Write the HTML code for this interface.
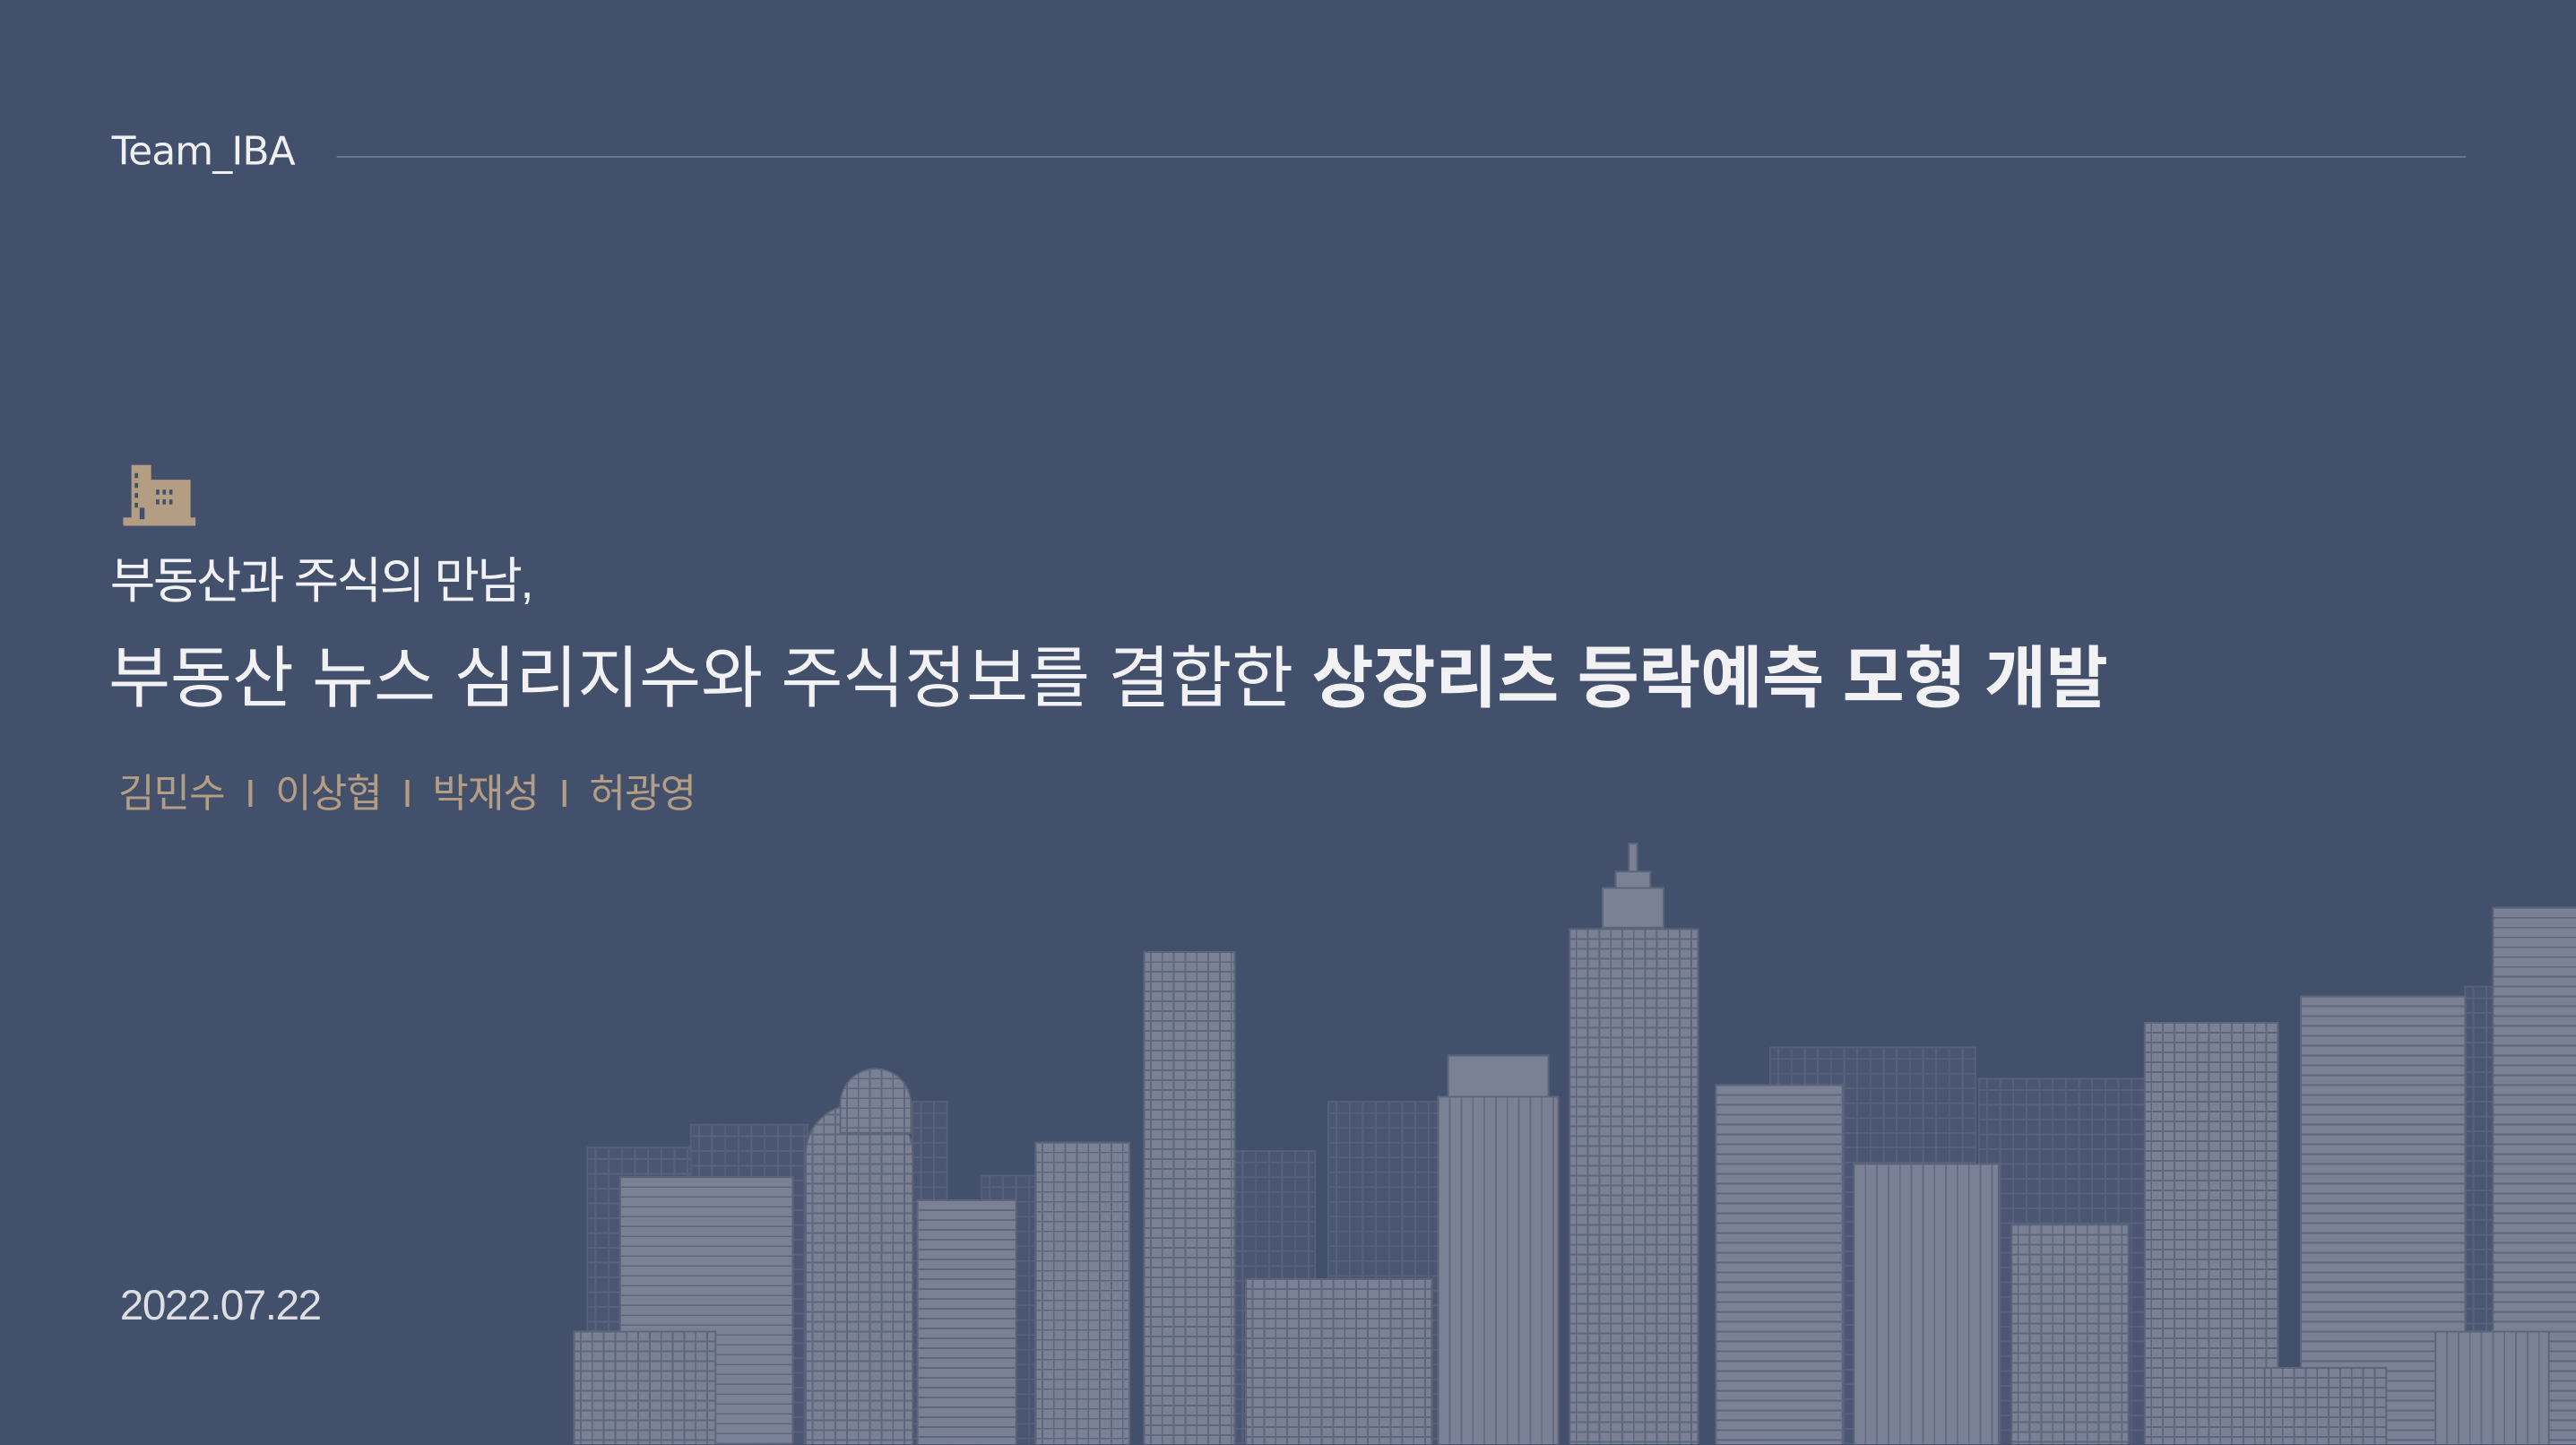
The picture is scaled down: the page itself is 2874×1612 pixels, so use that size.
<!DOCTYPE html>
<html><head><meta charset="utf-8"><style>
html,body{margin:0;padding:0;background:#43506c;overflow:hidden;width:2874px;height:1612px}
#s{position:absolute;left:0;top:0;width:1568px;height:879px;overflow:hidden;transform:scale(1.83291);transform-origin:0 0;background:#43506c;font-family:"Liberation Sans","Noto Sans CJK KR",sans-serif}
.t{position:absolute;white-space:nowrap}
.b{position:absolute;box-sizing:border-box}
.L{background:#7a8196;border:1px solid #5c647a}
.D{background:#4a5672;border:1px solid #55607b}
.hl{background-image:repeating-linear-gradient(180deg,transparent 0 5px,#5f677c 5px 6px)}
.vl{background-image:repeating-linear-gradient(90deg,transparent 0 6px,#646c82 6px 7px)}
.gw{background-image:repeating-linear-gradient(90deg,transparent 0 3px,#5f677c 3px 4px,transparent 4px 7px),repeating-linear-gradient(180deg,transparent 0 5px,#5f677c 5px 6px)}
.dw{background-image:repeating-linear-gradient(90deg,transparent 0 4px,#56617d 4px 5px,transparent 5px 8px),repeating-linear-gradient(180deg,transparent 0 6px,#56617d 6px 7px,transparent 7px 9px)}
</style></head><body><div id="s">
<div class="t" style="left:68px;top:78px;color:#f0f0f2;font-family:'DejaVu Sans','Liberation Sans',sans-serif;font-size:24px;letter-spacing:-0.5px">Team_IBA</div>
<div class="b" style="left:205px;top:95px;width:1296px;height:1px;background:#6f7891"></div>
<svg style="position:absolute;left:74px;top:281px" width="46" height="41" viewBox="0 0 46 41">
<rect x="6" y="2" width="12" height="36" fill="#b49e83"/><rect x="14" y="11" width="28" height="27" fill="#b49e83"/><rect x="1" y="34" width="44" height="5" fill="#b49e83"/>
<g fill="#43506c"><rect x="8" y="7" width="2" height="3"/><rect x="8" y="13" width="2" height="3"/><rect x="8" y="19" width="2" height="3"/><rect x="8" y="25" width="2" height="3"/>
<rect x="21" y="17" width="2" height="3"/><rect x="25" y="17" width="2" height="3"/><rect x="29" y="17" width="2" height="3"/><rect x="21" y="23" width="2" height="3"/><rect x="25" y="23" width="2" height="3"/><rect x="29" y="23" width="2" height="3"/><rect x="11" y="28" width="3" height="7"/></g></svg>
<div class="t" style="left:67px;top:329px;font-size:30px;color:#f2f2f4;letter-spacing:-1.4px">부동산과 주식의 만남,</div>
<div class="t" style="left:66px;top:379px;font-size:41px;color:#f2f2f4;letter-spacing:-0.15px">부동산 뉴스 심리지수와 주식정보를 결합한 <b>상장리츠 등락예측 모형 개발</b></div>
<div class="t" style="left:72px;top:463px;font-size:24px;color:#b49e83;letter-spacing:-0.5px">김민수 &nbsp;I&nbsp; 이상협 &nbsp;I&nbsp; 박재성 &nbsp;I&nbsp; 허광영</div>
<div class="t" style="left:73px;top:779px;font-size:26px;color:#dcdee4;letter-spacing:-0.8px">2022.07.22</div>

<div class="b D dw" style="left:357px;top:698px;width:64px;height:190px"></div>
<div class="b D dw" style="left:420px;top:684px;width:72px;height:200px"></div>
<div class="b D dw" style="left:555px;top:670px;width:22px;height:220px"></div>
<div class="b D dw" style="left:597px;top:715px;width:34px;height:170px"></div>
<div class="b D dw" style="left:751px;top:700px;width:50px;height:190px"></div>
<div class="b D dw" style="left:808px;top:670px;width:68px;height:220px"></div>
<div class="b D dw" style="left:1077px;top:637px;width:126px;height:250px"></div>
<div class="b D dw" style="left:1204px;top:656px;width:102px;height:230px"></div>
<div class="b D dw" style="left:1500px;top:600px;width:18px;height:290px"></div>
<div class="b L hl" style="left:377px;top:716px;width:106px;height:170px"></div>
<div class="b L gw" style="left:349px;top:810px;width:87px;height:80px"></div>
<div class="b L gw" style="left:490px;top:672px;width:66px;height:220px;border-radius:30px 30px 0 0"></div>
<div class="b L gw" style="left:511px;top:650px;width:44px;height:40px;border-radius:22px 22px 0 0"></div>
<div class="b L hl" style="left:558px;top:730px;width:61px;height:160px"></div>
<div class="b L gw" style="left:630px;top:695px;width:58px;height:190px"></div>
<div class="b L gw" style="left:696px;top:579px;width:56px;height:310px"></div>
<div class="b L gw" style="left:758px;top:778px;width:114px;height:110px"></div>
<div class="b L" style="left:881px;top:642px;width:62px;height:26px"></div>
<div class="b L vl" style="left:875px;top:667px;width:74px;height:220px"></div>
<div class="b L" style="left:991px;top:513px;width:6px;height:20px"></div>
<div class="b L" style="left:983px;top:530px;width:22px;height:12px"></div>
<div class="b L" style="left:975px;top:540px;width:38px;height:25px"></div>
<div class="b L gw" style="left:955px;top:565px;width:79px;height:325px"></div>
<div class="b L hl" style="left:1044px;top:660px;width:78px;height:230px"></div>
<div class="b L vl" style="left:1128px;top:708px;width:89px;height:180px"></div>
<div class="b L gw" style="left:1224px;top:745px;width:72px;height:145px"></div>
<div class="b L gw" style="left:1305px;top:622px;width:82px;height:265px"></div>
<div class="b L hl" style="left:1400px;top:606px;width:101px;height:280px"></div>
<div class="b L gw" style="left:1378px;top:832px;width:75px;height:60px"></div>
<div class="b L hl" style="left:1517px;top:552px;width:52px;height:336px"></div>
<div class="b L vl" style="left:1482px;top:810px;width:70px;height:80px"></div>
</div></body></html>
